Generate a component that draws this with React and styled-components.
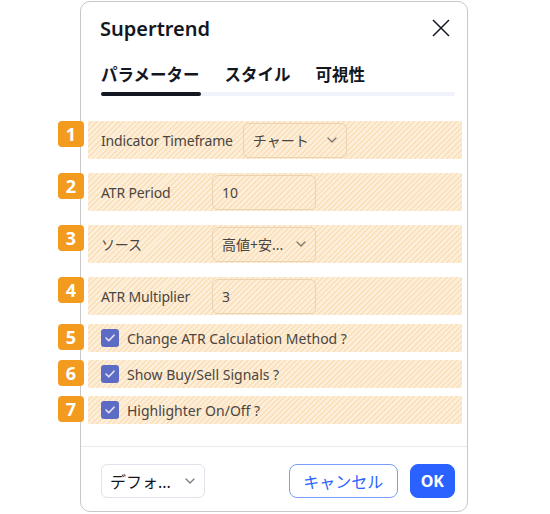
import React from "react";
import styled, { createGlobalStyle } from "styled-components";

const Global = createGlobalStyle`
  html, body {
    margin: 0;
    background: #fff;
    font-family: "Noto Sans", "Noto Sans CJK JP", sans-serif;
    color: #131722;
  }
`;

const Page = styled.div`
  padding: 1px 0 0 80px;
`;

const Dialog = styled.div`
  box-sizing: border-box;
  width: 388px;
  height: 511px;
  border: 1px solid #c8c8c8;
  border-radius: 10px;
  background: #fff;
  display: flex;
  flex-direction: column;
`;

const Header = styled.div`
  height: 52px;
  display: flex;
  align-items: center;
  justify-content: space-between;
  padding: 0 17px 0 19px;
`;

const Title = styled.h1`
  margin: 0;
  font-size: 20px;
  font-weight: 600;
  color: #131722;
`;

const Close = styled.button`
  border: 0;
  background: none;
  padding: 0;
  width: 18px;
  height: 18px;
  display: flex;
  cursor: pointer;
`;

const Tabs = styled.div`
  display: flex;
  gap: 25px;
  padding: 9px 20px 0;
`;

const Tab = styled.span`
  font-size: 16.5px;
  line-height: 24px;
  font-weight: 700;
  color: #131722;
`;

const Track = styled.div`
  margin: 5px 12px 0 20px;
  height: 4px;
  border-radius: 2px;
  background: #f0f3fa;
`;

const Thumb = styled.div`
  width: 100px;
  height: 100%;
  border-radius: 2px;
  background: #131722;
`;

const Body = styled.div`
  flex: 1;
  padding: 25px 5px 0 7px;
`;

const Params = styled.div`
  display: flex;
  flex-direction: column;
  gap: 14px;
`;

const Checks = styled.div`
  display: flex;
  flex-direction: column;
  gap: 8px;
  margin-top: 9px;
`;

const Row = styled.div`
  position: relative;
  height: ${p => p.$h}px;
  display: flex;
  align-items: center;
  gap: ${p => (p.$check ? 8 : 10)}px;
  padding-left: 13px;
  background: repeating-linear-gradient(
    135deg,
    #fdeed9 0px,
    #fdeed9 2.4px,
    #fbdfb9 2.4px,
    #fbdfb9 3.8px
  );
`;

const Badge = styled.span`
  position: absolute;
  left: -30px;
  top: 0;
  width: 26px;
  height: 26px;
  border-radius: 4px;
  background: #f39b1f;
  color: #fff;
  font-size: 18px;
  font-weight: 700;
  display: flex;
  align-items: center;
  justify-content: center;
`;

const Label = styled.span`
  min-width: 101px;
  font-size: 14px;
  letter-spacing: -0.15px;
  color: #4a4541;
  white-space: nowrap;
`;

const Field = styled.div`
  box-sizing: border-box;
  width: 104px;
  height: 35px;
  border: 1px solid #ead3b3;
  border-radius: 6px;
  display: flex;
  align-items: center;
  justify-content: space-between;
  padding: 0 9px 0 9px;
  font-size: 14px;
  color: #4a4541;
`;

const Box = styled.span`
  width: 18px;
  height: 18px;
  border-radius: 3px;
  background: #5c6cc5;
  display: flex;
  align-items: center;
  justify-content: center;
`;

const CheckText = styled.span`
  font-size: 14px;
  color: #4a4541;
`;

const Footer = styled.div`
  border-top: 1px solid #e8eaef;
  display: flex;
  align-items: center;
  padding: 17px 12px 13px 20px;
  gap: 12px;
`;

const Preset = styled.div`
  box-sizing: border-box;
  width: 104px;
  height: 34px;
  border: 1px solid #e0e3eb;
  border-radius: 6px;
  display: flex;
  align-items: center;
  justify-content: space-between;
  padding: 0 9px 0 8px;
  font-size: 16px;
  color: #131722;
  margin-right: auto;
`;

const Button = styled.button`
  box-sizing: border-box;
  height: 34px;
  border-radius: 8px;
  font-family: inherit;
  font-size: 16px;
  padding: 0 ${p => (p.$primary ? 10 : 13.5)}px;
  border: 1px solid ${p => (p.$primary ? "#2962ff" : "#7a9cff")};
  background: ${p => (p.$primary ? "#2962ff" : "#fff")};
  color: ${p => (p.$primary ? "#fff" : "#2962ff")};
  font-weight: ${p => (p.$primary ? 700 : 400)};
`;

const Chevron = ({ color = "#787b86" }) => (
  <svg width="10" height="6" viewBox="0 0 10 6" fill="none">
    <path d="M1 1l4 4 4-4" stroke={color} strokeWidth="1.3" strokeLinecap="round" strokeLinejoin="round" />
  </svg>
);

const params = [
  { n: 1, label: "Indicator Timeframe", value: "チャート", select: true },
  { n: 2, label: "ATR Period", value: "10" },
  { n: 3, label: "ソース", value: "高値+安...", select: true },
  { n: 4, label: "ATR Multiplier", value: "3" },
];

const checks = [
  { n: 5, label: "Change ATR Calculation Method ?" },
  { n: 6, label: "Show Buy/Sell Signals ?" },
  { n: 7, label: "Highlighter On/Off ?" },
];

export default function App() {
  return (
    <>
      <Global />
      <Page>
        <Dialog>
          <Header>
            <Title>Supertrend</Title>
            <Close>
              <svg width="18" height="18" viewBox="0 0 18 18">
                <path d="M1 1l16 16M17 1L1 17" stroke="#131722" strokeWidth="1.5" />
              </svg>
            </Close>
          </Header>
          <Tabs>
            <Tab>パラメーター</Tab>
            <Tab>スタイル</Tab>
            <Tab>可視性</Tab>
          </Tabs>
          <Track>
            <Thumb />
          </Track>
          <Body>
            <Params>
              {params.map(p => (
                <Row key={p.n} $h={38}>
                  <Badge>{p.n}</Badge>
                  <Label>{p.label}</Label>
                  <Field>
                    <span>{p.value}</span>
                    {p.select && <Chevron color="#7c7468" />}
                  </Field>
                </Row>
              ))}
            </Params>
            <Checks>
              {checks.map(c => (
                <Row key={c.n} $h={28} $check>
                  <Badge>{c.n}</Badge>
                  <Box>
                    <svg width="10" height="8" viewBox="0 0 10 8" fill="none">
                      <path d="M1 4l2.8 2.8L9 1.2" stroke="#e8e4f0" strokeWidth="1.6" strokeLinecap="round" strokeLinejoin="round" />
                    </svg>
                  </Box>
                  <CheckText>{c.label}</CheckText>
                </Row>
              ))}
            </Checks>
          </Body>
          <Footer>
            <Preset>
              <span>デフォ...</span>
              <Chevron />
            </Preset>
            <Button>キャンセル</Button>
            <Button $primary>OK</Button>
          </Footer>
        </Dialog>
      </Page>
    </>
  );
}
